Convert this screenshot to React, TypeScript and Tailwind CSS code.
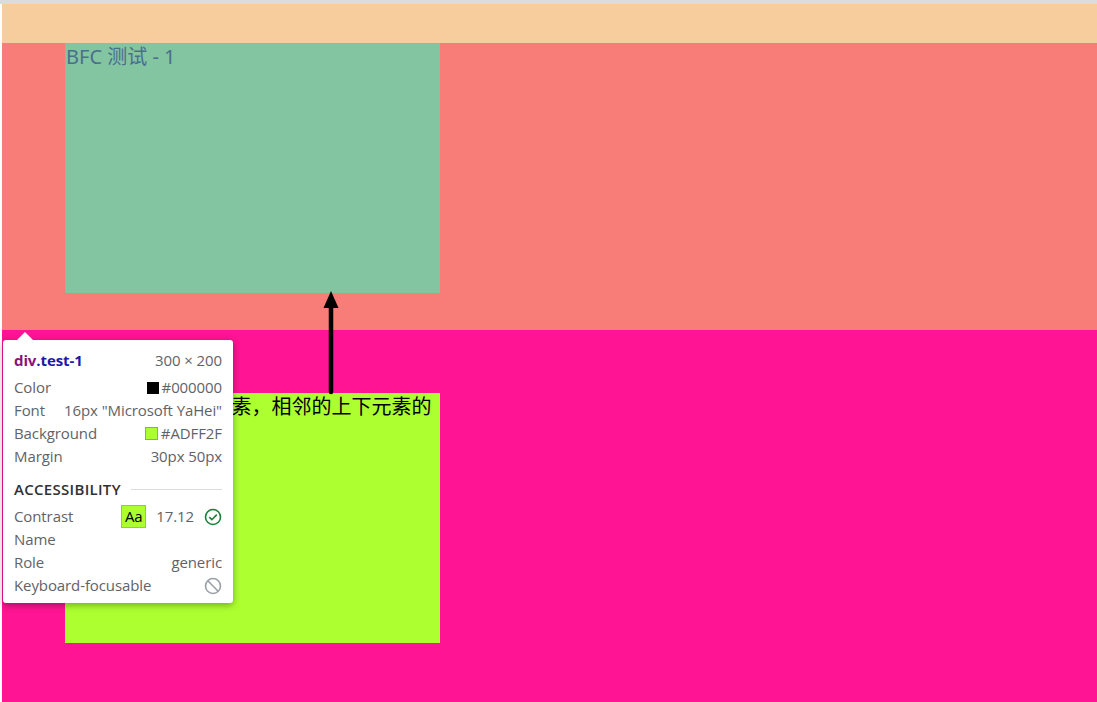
import React from "react";

const tipFont = { fontFamily: '"Open Sans", "Noto Sans", sans-serif' };

function Row({ label, children }: { label: string; children?: React.ReactNode }) {
  return (
    <div className="flex h-[23px] items-center justify-between whitespace-nowrap">
      <span className="text-[#5f6368]">{label}</span>
      <div className="flex items-center text-[#5f6368]">{children}</div>
    </div>
  );
}

function Tooltip() {
  return (
    <div
      className="absolute left-[3px] top-[340px] w-[230px] rounded-[3px] bg-white pl-[11px] pr-[11px] pt-[9px] pb-[6px] text-[15px] tracking-[-0.1px] shadow-[0_2px_7px_rgba(0,0,0,0.35)]"
      style={tipFont}
    >
      {/* notch */}
      <div className="absolute -top-[8px] left-[14px] h-0 w-0 border-x-[8px] border-b-[8px] border-x-transparent border-b-white" />
      <div className="mb-[4px] flex h-[23px] items-center justify-between">
        <span className="font-bold">
          <span className="text-[#881280]">div</span>
          <span className="text-[#1a1aa6]">.test-1</span>
        </span>
        <span className="text-[#5f6368]">300 × 200</span>
      </div>
      <Row label="Color">
        <span className="mr-[3px] inline-block h-[12px] w-[12px] bg-black" />
        #000000
      </Row>
      <Row label="Font">16px "Microsoft YaHei"</Row>
      <Row label="Background">
        <span className="mr-[3px] inline-block h-[13px] w-[13px] border border-[#7fbf2a] bg-[#adff2f]" />
        #ADFF2F
      </Row>
      <Row label="Margin">30px 50px</Row>
      <div className="mt-[10px] flex h-[23px] items-center">
        <span className="font-semibold tracking-[0.3px] text-[#303134]">ACCESSIBILITY</span>
        <div className="ml-[10px] h-px flex-1 bg-[#dadce0]" />
      </div>
      <div className="mt-[4px] flex h-[23px] items-center justify-between">
        <span className="text-[#5f6368]">Contrast</span>
        <div className="flex items-center">
          <span className="flex h-[23px] w-[25px] items-center justify-center border border-[#8fd32a] bg-[#adff2f] text-black">
            Aa
          </span>
          <span className="ml-[10px] text-[#5f6368]">17.12</span>
          <svg className="ml-[10px]" width="18" height="18" viewBox="0 0 18 18" fill="none">
            <circle cx="9" cy="9" r="7.5" stroke="#188038" strokeWidth="1.6" />
            <path d="M5.3 9.2 L7.9 11.7 L12.8 6.6" stroke="#188038" strokeWidth="1.6" />
          </svg>
        </div>
      </div>
      <Row label="Name" />
      <Row label="Role">generic</Row>
      <Row label="Keyboard-focusable">
        <svg width="18" height="18" viewBox="0 0 18 18" fill="none">
          <circle cx="9" cy="9" r="7.5" stroke="#9aa0a6" strokeWidth="1.6" />
          <path d="M3.8 3.8 L14.2 14.2" stroke="#9aa0a6" strokeWidth="1.6" />
        </svg>
      </Row>
    </div>
  );
}

export default function App() {
  return (
    <div
      className="relative h-[702px] w-[1097px] overflow-hidden bg-white"
      style={{ fontFamily: '"Noto Sans", "Noto Sans CJK SC", sans-serif' }}
    >
      <div className="h-[4px] bg-[#dcdcde]" />
      <div className="pl-[2px]">
        <div className="h-[39px] bg-[#f8cd9e]" />
        <div className="h-[287px] bg-[#f87d79] pl-[63px]">
          <div className="h-[250px] w-[375px] border-l border-t border-[#b9a79a] bg-[#84c5a1] text-[20px] leading-[26px] text-[#4b6e8f]">
            BFC 测试 - 1
          </div>
        </div>
        <div className="h-[372px] bg-[#ff1493] pl-[63px] pt-[63px]">
          <div className="h-[250px] w-[375px] bg-[#adff2f] text-[20px] leading-[28px] text-black">
            同一 BFC 的两个元素，相邻的上下元素的margin会重叠
          </div>
        </div>
      </div>

      {/* annotation arrow */}
      <svg className="absolute left-[316px] top-[286px]" width="30" height="110" viewBox="0 0 30 110">
        <path d="M15 20 L15 106" stroke="black" strokeWidth="4.5" strokeLinecap="round" />
        <path d="M15 5 L22.5 22 L7.5 22 Z" fill="black" />
      </svg>

      <Tooltip />
    </div>
  );
}
